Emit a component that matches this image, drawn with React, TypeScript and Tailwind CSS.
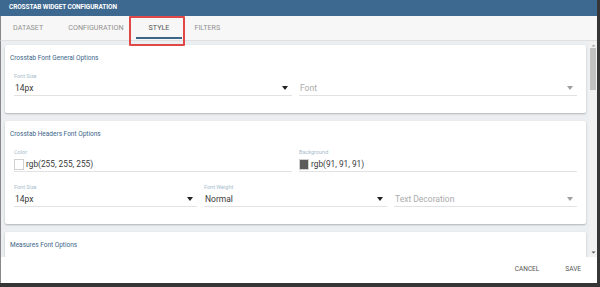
import React from "react";

const Arrow = ({ muted }: { muted?: boolean }) => (
	<svg width="6" height="4" viewBox="0 0 6 4" className="shrink-0">
		<path d="M0 0 L6 0 L3 4 Z" fill={muted ? "#a0a0a0" : "#222"} />
	</svg>
);

const SelectField = ({ label, value, placeholder }: { label?: string; value?: string; placeholder?: string }) => (
	<div className="flex flex-col flex-1 min-w-0">
		<div className="h-[8px] leading-[8px] text-[5.5px] text-[#a7bccd]">{label ?? ""}</div>
		<div className="mt-[1px] h-[15px] flex items-center justify-between border-b border-[#e2e2e2] pr-[4px]">
			{value ? (
				<span className="text-[8.5px] text-[#3a3a3a] pl-[1px]">{value}</span>
			) : (
				<span className="text-[8.5px] text-[#ababab] pl-[1px]">{placeholder}</span>
			)}
			<Arrow muted={!value} />
		</div>
	</div>
);

const ColorField = ({ label, swatch, value }: { label: string; swatch: string; value: string }) => (
	<div className="flex flex-col flex-1 min-w-0">
		<div className="h-[8px] leading-[8px] text-[5.5px] text-[#a7bccd]">{label}</div>
		<div className="mt-[1px] h-[15px] flex items-center gap-[2px] border-b border-[#e2e2e2]">
			<span className="w-[10px] h-[11px] border border-[#d0d0d0]" style={{ background: swatch }} />
			<span className="text-[8.3px] text-[#3a3a3a]">{value}</span>
		</div>
	</div>
);

const Card = ({ title, children }: { title: string; children?: React.ReactNode }) => (
	<div className="bg-white rounded-[2px] shadow-[0_1px_2px_rgba(0,0,0,0.25)] pt-[8px] px-[5px] pb-[17px]">
		<div className="h-[10px] leading-[10px] text-[6.5px] text-[#3b6589]">{title}</div>
		{children}
	</div>
);

export default function App() {
	const tabs = ["DATASET", "CONFIGURATION", "STYLE", "FILTERS"];
	return (
		<div className="w-[600px] h-[287px] bg-[#363636] overflow-hidden" style={{ fontFamily: "Roboto, 'Liberation Sans', sans-serif" }}>
			<div className="w-[597px] h-[283px] flex flex-col relative">
				{/* title bar */}
				<div className="h-[16px] bg-[#3d6890] flex items-center pl-[9px]">
					<span className="text-[6.5px] font-bold text-white tracking-[-0.1px]">CROSSTAB WIDGET CONFIGURATION</span>
				</div>
				{/* tabs */}
				<div className="h-[25px] bg-[#f7f7f7] border-b border-[#e0e0e0] border-l border-l-[#888] flex">
					{tabs.map((t) => (
						<div key={t} className="relative px-[12.5px] first:pl-[12px] flex items-center">
							<span className={`text-[7.2px] ${t === "STYLE" ? "text-[#555]" : "text-[#929292]"}`}>{t}</span>
							{t === "STYLE" && <span className="absolute left-0 right-0 bottom-[1px] h-[2px] bg-[#3b6589]" />}
						</div>
					))}
				</div>
				{/* content */}
				<div className="h-[216px] flex bg-[#eceff1] border-l border-l-[#888] overflow-hidden">
					<div className="flex-1 flex flex-col gap-[8px] pt-[4px] pl-[4px] pr-[3px]">
						<Card title="Crosstab Font General Options">
							<div className="mt-[9px] px-[4px] flex gap-[7px]">
								<SelectField label="Font Size" value="14px" />
								<SelectField placeholder="Font" />
							</div>
						</Card>
						<Card title="Crosstab Headers Font Options">
							<div className="mt-[9px] px-[4px] flex gap-[7px]">
								<ColorField label="Color" swatch="#ffffff" value="rgb(255, 255, 255)" />
								<ColorField label="Background" swatch="#5b5b5b" value="rgb(91, 91, 91)" />
							</div>
							<div className="mt-[11px] px-[4px] flex gap-[7px]">
								<SelectField label="Font Size" value="14px" />
								<SelectField label="Font Weight" value="Normal" />
								<SelectField placeholder="Text Decoration" />
							</div>
						</Card>
						<Card title="Measures Font Options">
							<div className="h-[40px]" />
						</Card>
					</div>
					{/* scrollbar */}
					<div className="w-[8px] bg-[#f1f1f1] flex flex-col items-center">
						<svg width="5" height="5" viewBox="0 0 5 5" className="mt-[2px]">
							<path d="M0.5 3.5 L2.5 1.5 L4.5 3.5 Z" fill="#a3a3a3" />
						</svg>
						<div className="w-[6px] h-[42px] bg-[#c1c1c1]" />
						<div className="flex-1" />
						<svg width="5" height="5" viewBox="0 0 5 5" className="mb-[2px]">
							<path d="M0.5 1.5 L2.5 3.5 L4.5 1.5 Z" fill="#505050" />
						</svg>
					</div>
				</div>
				{/* footer */}
				<div className="flex-1 bg-white border-l border-l-[#888] flex items-center justify-end gap-[26px] pr-[16px]">
					<span className="text-[6.5px] text-[#555]">CANCEL</span>
					<span className="text-[6.5px] text-[#555]">SAVE</span>
				</div>
				{/* highlight box over STYLE tab */}
				<div className="absolute left-[129px] top-[16px] w-[56px] h-[30px] border-2 border-[#e04848] rounded-[1px]" />
			</div>
		</div>
	);
}
